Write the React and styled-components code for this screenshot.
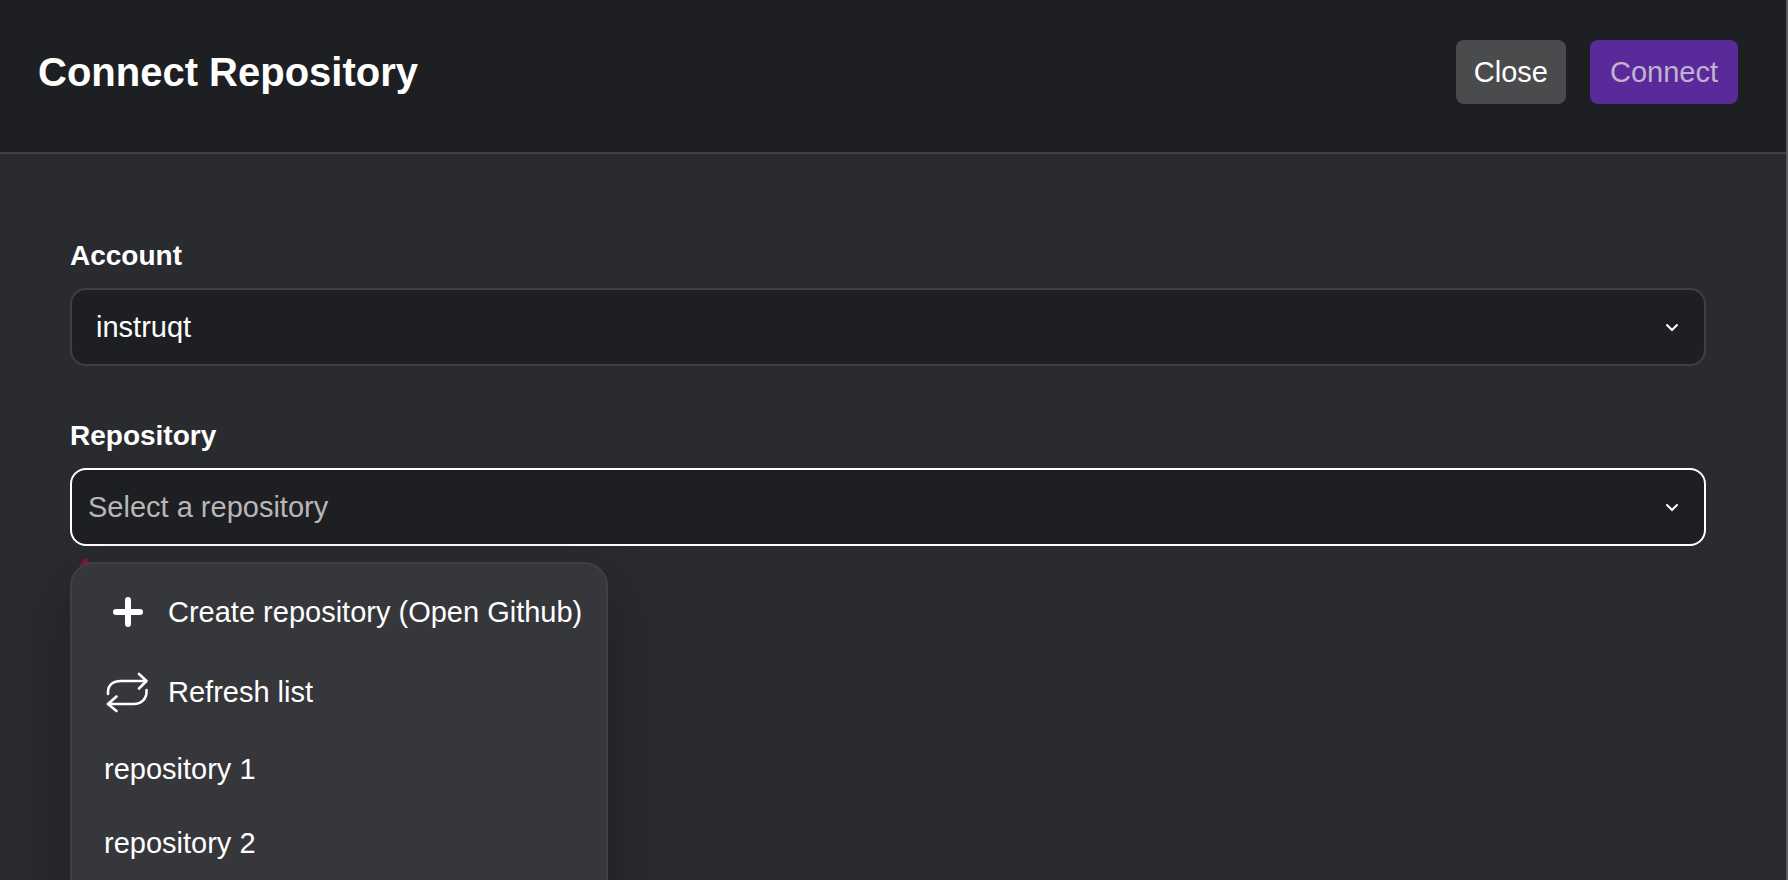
import React, { useState } from 'react';
import styled, { createGlobalStyle, css } from 'styled-components';

const GlobalStyle = createGlobalStyle`
  * {
    box-sizing: border-box;
  }

  body {
    margin: 0;
    background-color: #2a2b2e;
    color: #ffffff;
    font-family: "Liberation Sans", Arial, sans-serif;
    font-size: 29px;
    line-height: 36px;
  }
`;

const Page = styled.div`
  display: flex;
  flex-direction: column;
  height: 100vh;
  overflow: hidden;
  border-right: 2px solid #5a5b5d;
`;

const Header = styled.header`
  display: flex;
  align-items: flex-start;
  justify-content: space-between;
  padding: 40px 48px 48px 38px;
  background-color: #1e1f22;
  border-bottom: 2px solid #414246;
`;

const Title = styled.h1`
  margin: 0;
  font-size: 40px;
  font-weight: bold;
  line-height: 64px;
`;

const Actions = styled.div`
  display: flex;
  gap: 24px;
`;

const Button = styled.button`
  height: 64px;
  padding: 0 ${(props) => (props.$primary ? 20 : 18)}px;
  border: none;
  border-radius: 8px;
  background-color: ${(props) => (props.$primary ? '#5a2a9b' : '#4a4b4d')};
  color: ${(props) => (props.$primary ? '#c1b2d0' : '#ffffff')};
  font: inherit;
  cursor: pointer;

  &:disabled {
    cursor: not-allowed;
  }
`;

const Form = styled.form`
  display: flex;
  flex-direction: column;
  gap: 52px;
  padding: 84px 80px 0 70px;
`;

const Field = styled.div`
  display: flex;
  flex-direction: column;
`;

const Label = styled.label`
  margin-bottom: 14px;
  font-size: 28px;
  font-weight: bold;
`;

const ControlWrapper = styled.div`
  position: relative;
`;

const controlStyles = css`
  display: block;
  width: 100%;
  height: 78px;
  border: 2px solid #3f4044;
  border-radius: 16px;
  outline: none;
  background-color: #1e1f22;
  color: #ffffff;
  font: inherit;
`;

const Select = styled.select`
  ${controlStyles}
  appearance: none;
  padding: 0 64px 0 24px;
`;

const ComboInput = styled.input`
  ${controlStyles}
  padding: 0 64px 0 16px;
  border-color: ${(props) => (props.$open ? '#ffffff' : '#3f4044')};

  &::placeholder {
    color: #b7b7b8;
    opacity: 1;
  }
`;

const Chevron = styled.svg`
  position: absolute;
  top: 50%;
  right: 26px;
  width: 16px;
  height: 16px;
  transform: translateY(-50%);
  pointer-events: none;
`;

const Warning = styled.svg`
  width: 30px;
  height: 26px;
  margin-top: 12px;
  fill: #8c1238;
  stroke: #8c1238;
  stroke-width: 4;
  stroke-linejoin: round;
`;

const Menu = styled.ul`
  position: absolute;
  top: 100%;
  left: 0;
  z-index: 1;
  margin: 16px 0 0;
  padding: 8px 0 48px;
  border: 2px solid #3f4043;
  border-radius: 24px;
  background-color: #36373a;
  box-shadow: 0 24px 64px rgba(0, 0, 0, 0.3);
  list-style: none;
`;

const MenuItem = styled.button`
  display: flex;
  align-items: center;
  gap: 18px;
  width: 100%;
  height: ${(props) => (props.$withIcon ? 80 : 74)}px;
  padding: 0 24px 0 32px;
  border: none;
  background: none;
  color: inherit;
  font: inherit;
  text-align: left;
  white-space: nowrap;
  cursor: pointer;
`;

const Icon = styled.svg`
  flex-shrink: 0;
  width: 46px;
  height: 46px;
  fill: none;
  stroke: currentColor;
  stroke-linecap: round;
  stroke-linejoin: round;
`;

const ChevronDown = () => (
  <Chevron viewBox="0 0 16 16" fill="none" stroke="#ffffff" strokeWidth="2" strokeLinecap="round" aria-hidden="true">
    <path d="M3 6L8 11L13 6" />
  </Chevron>
);

const WarningIcon = () => (
  <Warning viewBox="0 0 30 26" role="img" aria-label="Required">
    <path d="M15.500 2L27 23H4Z" />
  </Warning>
);

const PlusIcon = () => (
  <Icon viewBox="0 0 46 46" strokeWidth="6" aria-hidden="true">
    <path d="M24 11V35M12 23H36" />
  </Icon>
);

const RefreshIcon = () => (
  <Icon viewBox="0 0 46 46" strokeWidth="2.6" aria-hidden="true">
    <path d="M4 25V23C4 16 9 12 17 12H42" />
    <path d="M35 5L42.500 12L35 19.500" />
    <path d="M42.500 21V23C42.500 30 37 35 30 35H4" />
    <path d="M12.500 27.500L4 35L12.500 42" />
  </Icon>
);

const repositories = ['repository 1', 'repository 2'];

const App = () => {
  const [open, setOpen] = useState(true);
  const [repository, setRepository] = useState('');

  const handleSelect = (name) => {
    setRepository(name);
    setOpen(false);
  };

  return (
    <>
      <GlobalStyle />
      <Page>
        <Header>
          <Title>Connect Repository</Title>
          <Actions>
            <Button type="button">Close</Button>
            <Button type="submit" form="connect-form" $primary disabled={!repository}>
              Connect
            </Button>
          </Actions>
        </Header>
        <Form id="connect-form" onSubmit={(e) => e.preventDefault()}>
          <Field>
            <Label htmlFor="account">Account</Label>
            <ControlWrapper>
              <Select id="account" defaultValue="instruqt">
                <option value="instruqt">instruqt</option>
              </Select>
              <ChevronDown />
            </ControlWrapper>
          </Field>
          <Field>
            <Label htmlFor="repository">Repository</Label>
            <ControlWrapper>
              <ComboInput
                id="repository"
                type="text"
                role="combobox"
                aria-expanded={open}
                aria-controls="repository-menu"
                placeholder="Select a repository"
                value={repository}
                readOnly
                $open={open}
                onClick={() => setOpen(!open)}
              />
              <ChevronDown />
              {open && (
                <Menu id="repository-menu">
                  <li>
                    <MenuItem type="button" $withIcon>
                      <PlusIcon />
                      Create repository (Open Github)
                    </MenuItem>
                  </li>
                  <li>
                    <MenuItem type="button" $withIcon>
                      <RefreshIcon />
                      Refresh list
                    </MenuItem>
                  </li>
                  {repositories.map((name) => (
                    <li key={name}>
                      <MenuItem type="button" onClick={() => handleSelect(name)}>
                        {name}
                      </MenuItem>
                    </li>
                  ))}
                </Menu>
              )}
            </ControlWrapper>
            {!repository && <WarningIcon />}
          </Field>
        </Form>
      </Page>
    </>
  );
};

export default App;
